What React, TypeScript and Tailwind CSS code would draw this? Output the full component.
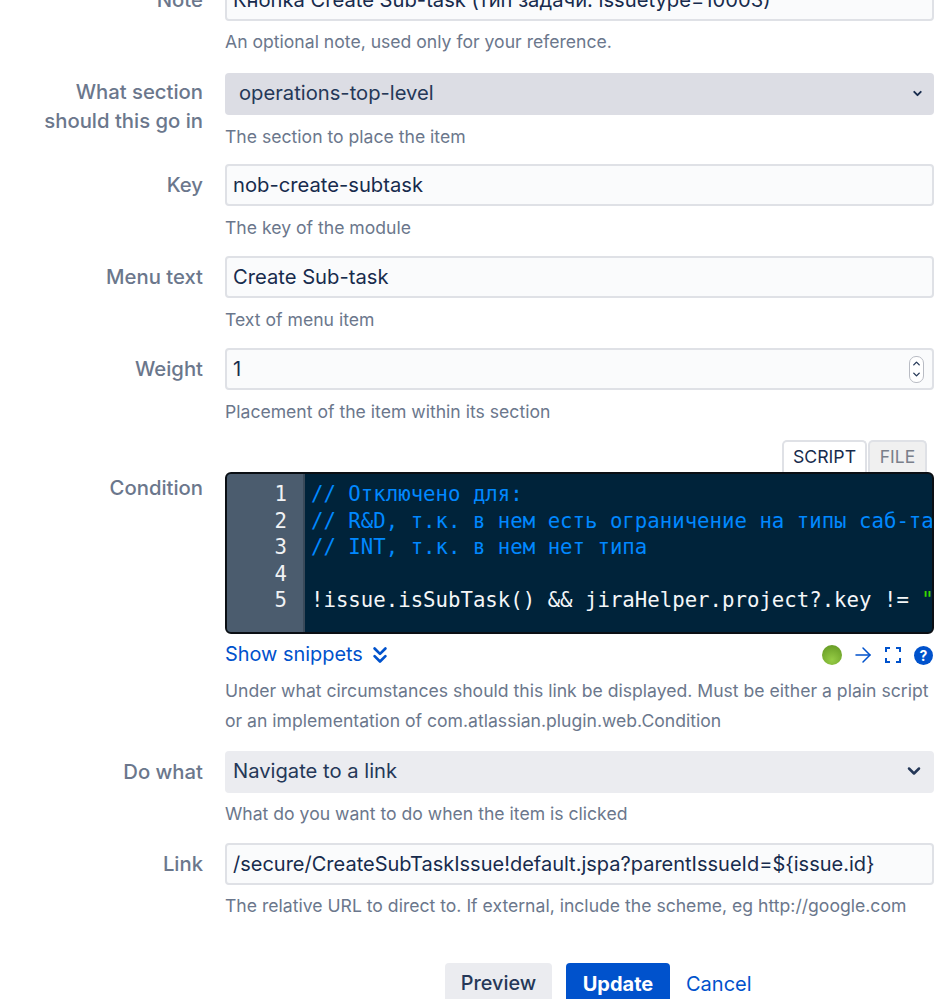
import { ChevronDown, ChevronUp, ChevronsDown, ArrowRight } from 'lucide-react'
import type { ReactNode } from 'react'

const fieldClass = 'flex h-[42px] items-center rounded-[4px] border-2 border-[#dfe1e6] bg-[#fafbfc] pl-[6px] pr-2 text-[20.2px] text-[#172b4d]'

function Row({ label, children, className }: { label: ReactNode; children: ReactNode; className?: string }) {
  return (
    <div className={`flex ${className ?? ''}`}>
      <div className="w-[203px] shrink-0 pt-[7px] text-right text-[20.3px] font-medium leading-[28px] text-[#6b778c]">{label}</div>
      <div className="ml-[22px] min-w-0 flex-1">{children}</div>
    </div>
  )
}

function Help({ children, low }: { children: ReactNode; low?: boolean }) {
  return <div className={`whitespace-nowrap text-[17.6px] leading-[30px] text-[#6b778c] ${low ? 'mt-[7px]' : 'mt-[6px]'}`}>{children}</div>
}

function CodeLine({ children }: { children?: ReactNode }) {
  return <div className="h-[26.5px] whitespace-pre leading-[26.5px]">{children}</div>
}

export default function App() {
  return (
    <div className="h-[999px] w-[942px] overflow-hidden bg-white font-['Inter','Noto_Sans',sans-serif]">
      <div className="-mt-[21px] pr-2">
        <Row label="Note" className="mb-[16px]">
          <div className={fieldClass}>Кнопка Create Sub-task (тип задачи: issuetype=10003)</div>
          <Help>An optional note, used only for your reference.</Help>
        </Row>

        <Row label={<div className="-mt-[3px] leading-[29px]">What section<br />should this go in</div>} className="mb-[12px]">
          <div className="flex h-[42px] items-center justify-between rounded-[4px] bg-[#dcdde4] pb-[2px] pl-[14px] pr-[10px] text-[20.2px] text-[#253858]">
            operations-top-level
            <ChevronDown size={13} strokeWidth={3.5} className="text-[#172b4d]" />
          </div>
          <Help low>The section to place the item</Help>
        </Row>

        <Row label="Key" className="mb-[13px]">
          <div className={fieldClass}>nob-create-subtask</div>
          <Help low>The key of the module</Help>
        </Row>

        <Row label="Menu text" className="mb-[13px]">
          <div className={fieldClass}>Create Sub-task</div>
          <Help low>Text of menu item</Help>
        </Row>

        <Row label="Weight" className="mb-[13px]">
          <div className={`${fieldClass} justify-between`}>
            1
            <div className="flex h-[27px] w-[15px] flex-col items-center justify-center rounded-[7px] border border-[#b9bcc4] bg-white text-[#253858]">
              <ChevronUp size={11} strokeWidth={3} />
              <ChevronDown size={11} strokeWidth={3} />
            </div>
          </div>
          <Help low>Placement of the item within its section</Help>
        </Row>

        <Row label={<div className="mt-[27px]">Condition</div>} className="mb-[15px]">
          <div className="flex h-[32px] justify-end pr-[7px]">
            <div className="flex w-[85px] items-center justify-center rounded-t-[5px] border-2 border-b-0 border-[#dfe1e6] bg-white text-[17.7px] text-[#172b4d]">SCRIPT</div>
            <div className="ml-[1px] flex w-[59px] items-center justify-center rounded-t-[5px] border-2 border-b-0 border-[#dfe1e6] bg-[#f0f0f0] text-[17.5px] text-[#7a7f8a]">FILE</div>
          </div>
          <div className="flex h-[162px] overflow-hidden rounded-[6px] border-2 border-[#0b0f14] bg-[#00233a] font-['DejaVu_Sans_Mono',monospace] text-[20.7px]">
            <div className="w-[78px] shrink-0 border-r-2 border-[#3a4a5a] bg-[#4b5c6e] pr-[16px] pt-[7px] text-right text-[#f0f2f4]">
              <CodeLine>1</CodeLine>
              <CodeLine>2</CodeLine>
              <CodeLine>3</CodeLine>
              <CodeLine>4</CodeLine>
              <CodeLine>5</CodeLine>
            </div>
            <div className="min-w-0 flex-1 overflow-hidden pl-[6px] pt-[7px] text-[#f4f6f8]">
              <CodeLine><span className="text-[#0088ff]">// Отключено для:</span></CodeLine>
              <CodeLine><span className="text-[#0088ff]">// R&amp;D, т.к. в нем есть ограничение на типы саб-тасков</span></CodeLine>
              <CodeLine><span className="text-[#0088ff]">// INT, т.к. в нем нет типа</span></CodeLine>
              <CodeLine />
              <CodeLine>!issue.isSubTask() &amp;&amp; jiraHelper.project?.key != <span className="text-[#3ad900]">"</span></CodeLine>
            </div>
          </div>
          <div className="mt-[6px] flex h-[30px] items-center justify-between">
            <div className="flex items-center gap-[4px] text-[19.9px] text-[#0052cc]">
              Show snippets
              <ChevronsDown size={26} strokeWidth={2.5} />
            </div>
            <div className="flex items-center pr-[1px] text-[#0052cc]">
              <div className="h-[20px] w-[20px] rounded-full bg-[radial-gradient(circle_at_50%_75%,#96cc45,#5f9420)]" />
              <ArrowRight size={24} strokeWidth={1.5} className="ml-[9px]" />
              <svg width="16" height="16" viewBox="0 0 16 16" fill="none" stroke="currentColor" strokeWidth="2" className="ml-[10px]">
                <path d="M1 5V1h4M11 1h4v4M15 11v4h-4M5 15H1v-4" />
              </svg>
              <div className="ml-[13px] flex h-[19px] w-[19px] items-center justify-center rounded-full bg-[#0052cc] text-[14px] font-bold text-white">?</div>
            </div>
          </div>
          <div className="mt-[6px] whitespace-nowrap text-[17.6px] leading-[30px] text-[#6b778c]">
            Under what circumstances should this link be displayed. Must be either a plain script<br />
            or an implementation of com.atlassian.plugin.web.Condition
          </div>
        </Row>

        <Row label="Do what" className="mb-[14px]">
          <div className="flex h-[42px] items-center justify-between rounded-[4px] bg-[#ebecf0] pb-[2px] pl-2 pr-[10px] text-[20.2px] text-[#253858]">
            Navigate to a link
            <ChevronDown size={20} strokeWidth={3} className="text-[#253858]" />
          </div>
          <Help>What do you want to do when the item is clicked</Help>
        </Row>

        <Row label="Link" className="mb-[42px]">
          <div className={`${fieldClass} whitespace-nowrap text-[20px]`}>{'/secure/CreateSubTaskIssue!default.jspa?parentIssueId=${issue.id}'}</div>
          <Help>The relative URL to direct to. If external, include the scheme, eg http://google.com</Help>
        </Row>

        <div className="flex items-center pl-[445px] text-[20px]">
          <div className="flex h-[42px] w-[107px] items-center justify-center rounded-[4px] bg-[#ebecf0] text-[19.8px] font-medium text-[#253858]">Preview</div>
          <div className="ml-[14px] flex h-[42px] w-[104px] items-center justify-center rounded-[4px] bg-[#0052cc] font-bold text-white">Update</div>
          <div className="ml-[16px] text-[#0052cc]">Cancel</div>
        </div>
      </div>
    </div>
  )
}
